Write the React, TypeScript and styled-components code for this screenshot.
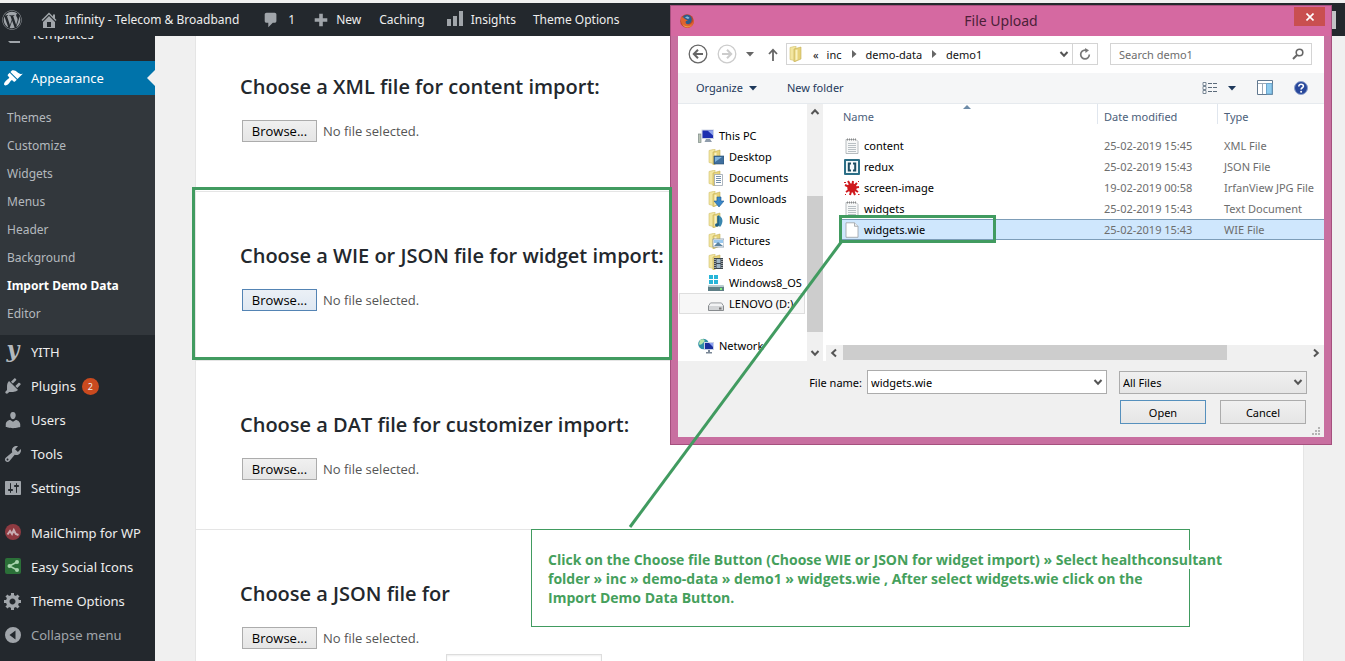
import React from "react";
import styled, { createGlobalStyle } from "styled-components";
import { FaWordpress } from "react-icons/fa";

const GREEN = "#419b60";
const UI_FONT = `"Noto Sans", "Open Sans", sans-serif`;

const GlobalStyle = createGlobalStyle`
  * { box-sizing: border-box; }
  body { margin: 0; background: #f0f0f0; font-family: ${UI_FONT}; }
  button, input, select { font: inherit; color: inherit; margin: 0; }
  ul { list-style: none; margin: 0; padding: 0; }
  a { color: inherit; text-decoration: none; }
`;

/* ---------- page ---------- */

const Page = styled.div`
  position: relative;
  display: flex;
  flex-direction: column;
  height: 100vh;
  padding-top: 3px;
  overflow: hidden;
`;

const AdminBar = styled.header`
  position: relative;
  z-index: 1;
  display: flex;
  flex: none;
  align-items: center;
  height: 33px;
  padding: 0 9px 0 2px;
  background: #23282d;
  color: #eee;
  font-size: 12px;
  white-space: nowrap;
`;

const BarLink = styled.a<{ $gap: number; $space?: number }>`
  display: flex;
  align-items: center;
  gap: ${(p) => p.$space ?? 8}px;
  margin-left: ${(p) => p.$gap}px;
  svg { color: #a0a5aa; }
`;

const Avatar = styled.span`
  width: 18px;
  height: 18px;
  margin-left: auto;
  background: #c3c4c7;
`;

const Body = styled.div`
  display: flex;
  flex: 1;
  min-height: 0;
`;

/* ---------- side menu ---------- */

const Sidebar = styled.nav`
  flex: none;
  width: 155px;
  background: #23282d;
  color: #eee;
  font-size: 13px;
`;

const Menu = styled.ul`
  margin-top: -19px;
`;

const MenuItem = styled.li<{ $after?: number }>`
  margin-bottom: ${(p) => p.$after ?? 0}px;
`;

const MenuLink = styled.a<{ $active?: boolean; $muted?: boolean }>`
  position: relative;
  display: flex;
  align-items: center;
  gap: 8px;
  height: 34px;
  padding-left: 3px;
  white-space: nowrap;
  background: ${(p) => (p.$active ? "#0073aa" : "transparent")};
  color: ${(p) => (p.$active ? "#fff" : p.$muted ? "#a0a5aa" : "#eee")};
  svg { flex: none; color: ${(p) => (p.$active ? "#fff" : "#a0a5aa")}; }
  &::after {
    content: "";
    display: ${(p) => (p.$active ? "block" : "none")};
    position: absolute;
    right: 0;
    border: 8px solid transparent;
    border-left: 0;
    border-right-color: #f0f0f0;
  }
`;

const YithMark = styled.span`
  width: 20px;
  padding-bottom: 6px;
  color: #b4b9be;
  font: italic bold 22px/18px "DejaVu Serif", serif;
  text-align: center;
`;

const Count = styled.span`
  width: 17px;
  height: 17px;
  margin-left: -2px;
  border-radius: 50%;
  background: #ca4a1f;
  font-size: 9px;
  line-height: 17px;
  text-align: center;
`;

const SubMenu = styled.ul`
  padding: 9px 0 7px;
  background: #32373c;
  color: #b4b9be;
`;

const SubLink = styled.a<{ $current?: boolean }>`
  display: block;
  padding-left: 7px;
  line-height: 28px;
  font-size: 12px;
  font-weight: ${(p) => (p.$current ? 700 : 400)};
  color: ${(p) => (p.$current ? "#fff" : "inherit")};
`;

/* ---------- import panel ---------- */

const Main = styled.main`
  flex: 1;
  min-width: 0;
  padding: 0 41px 0 40px;
  background: #f0f0f0;
`;

const Panel = styled.div`
  min-height: calc(100% + 13px);
  margin-top: -13px;
  border: 1px solid #e5e5e5;
  border-width: 0 1px;
  background: #fff;
`;

const Section = styled.section<{ $rule?: string }>`
  padding: 50px 44px 0;
  &::after {
    content: "";
    display: block;
    width: ${(p) => p.$rule ?? "100%"};
    margin: 49px -44px 0;
    border-bottom: 1px solid #e5e5e5;
  }
`;

const Heading = styled.h2`
  margin: 0 0 19px;
  color: #23282d;
  font-family: "Open Sans", "Noto Sans", sans-serif;
  font-size: 20px;
  font-weight: 600;
  line-height: 28px;
  white-space: nowrap;
`;

const FileRow = styled.div`
  display: flex;
  align-items: center;
  gap: 6px;
  padding-left: 2px;
  color: #555;
  font-family: "Open Sans", "Noto Sans", sans-serif;
  font-size: 13px;
`;

const BrowseButton = styled.button<{ $focus?: boolean }>`
  width: 75px;
  height: 22px;
  padding: 0;
  border: 1px solid ${(p) => (p.$focus ? "#5484b4" : "#acacac")};
  background: ${(p) => (p.$focus ? "linear-gradient(#ebf0f6, #dfe8f2)" : "linear-gradient(#f0f0f0, #e5e5e5)")};
  color: #000;
  line-height: 20px;
`;

const OptionsInput = styled.input`
  display: block;
  width: 156px;
  height: 28px;
  margin: 5px 0 0 206px;
  border: 1px solid #ddd;
  box-shadow: inset 0 1px 2px rgba(0, 0, 0, 0.07);
`;

/* ---------- upload window ---------- */

const Window = styled.div`
  position: absolute;
  z-index: 2;
  top: 5px;
  left: 670px;
  display: flex;
  flex-direction: column;
  width: 662px;
  height: 440px;
  padding: 0 7px 7px;
  border: 1px solid #a5507e;
  background: #c86fa0;
  color: #111;
  font-size: 11px;
`;

const TitleBar = styled.div`
  position: relative;
  display: flex;
  flex: none;
  align-items: center;
  height: 30px;
  margin: 0 -7px;
  padding: 0 9px;
  background: #d569a1;
`;

const WindowTitle = styled.h1`
  flex: 1;
  margin: 0 14px 0 0;
  color: #4b1f38;
  font-size: 14px;
  font-weight: 400;
  line-height: 30px;
  text-align: center;
`;

const CloseButton = styled.button`
  position: absolute;
  top: 1px;
  right: 6px;
  display: grid;
  place-items: center;
  width: 31px;
  height: 19px;
  padding: 0;
  border: 0;
  background: #c94f50;
  color: #fff;
`;

const Client = styled.div`
  display: flex;
  flex: 1;
  flex-direction: column;
  min-height: 0;
  background: #f0f0f0;
`;

const AddressRow = styled.div`
  display: flex;
  flex: none;
  align-items: center;
  height: 37px;
  padding: 0 12px 1px 10px;
  background: #fff;
`;

const PlainButton = styled.button<{ $gap?: number }>`
  display: inline-flex;
  align-items: center;
  gap: ${(p) => p.$gap ?? 6}px;
  padding: 0;
  border: 0;
  background: none;
`;

const NavButtons = styled.div`
  display: flex;
  align-items: center;
  gap: 9px;
  width: 98px;
  padding-right: 8px;
  > :last-child { margin-left: auto; }
`;

const PathBox = styled.div`
  display: flex;
  flex: 1;
  align-items: center;
  height: 22px;
  padding-left: 2px;
  border: 1px solid #d4d4d4;
`;

const Crumbs = styled.div`
  display: flex;
  flex: 1;
  align-items: center;
  gap: 8px;
`;

const RefreshButton = styled(PlainButton)`
  justify-content: center;
  width: 25px;
  height: 20px;
  margin-left: 3px;
  border-left: 1px solid #d4d4d4;
`;

const SearchBox = styled.label`
  display: flex;
  align-items: center;
  width: 202px;
  height: 22px;
  margin-left: 12px;
  padding: 0 7px 0 8px;
  border: 1px solid #d4d4d4;
`;

const SearchInput = styled.input`
  flex: 1;
  min-width: 0;
  padding: 0;
  border: 0;
  outline: 0;
  background: none;
  &::placeholder { color: #6d6d6d; opacity: 1; }
`;

const ToolRow = styled.div`
  display: flex;
  flex: none;
  align-items: center;
  height: 31px;
  padding: 0 16px 1px 18px;
  border-bottom: 1px solid #e6eaee;
  background: #f5f6f7;
  color: #1e395b;
`;

const ToolGroup = styled.div<{ $gap: number; $end?: boolean }>`
  display: flex;
  align-items: center;
  gap: ${(p) => p.$gap}px;
  margin-left: ${(p) => (p.$end ? "auto" : 0)};
`;

const Browser = styled.div`
  display: flex;
  flex: none;
  height: 257px;
  background: #fff;
`;

const Tree = styled.ul`
  flex: none;
  width: 129px;
  padding: 21px 2px 0 1px;
  overflow: hidden;
`;

const TreeRow = styled.li<{ $depth: number; $selected?: boolean; $after?: number }>`
  display: flex;
  align-items: center;
  gap: 5px;
  height: 21px;
  margin-bottom: ${(p) => p.$after ?? 0}px;
  padding-left: ${(p) => (p.$depth ? 28 : 18)}px;
  border: 1px solid ${(p) => (p.$selected ? "#dedede" : "transparent")};
  background: ${(p) => (p.$selected ? "#f7f7f7" : "none")};
  color: #000;
  white-space: nowrap;
  svg { flex: none; }
`;

const VScroll = styled.div`
  display: flex;
  flex: none;
  flex-direction: column;
  align-items: center;
  width: 16px;
  background: #f0f0f0;
`;

const VThumb = styled.div`
  width: 16px;
  height: 136px;
  margin: 76px 0 auto;
  background: #cdcdcd;
`;

const ArrowCell = styled.span`
  display: grid;
  flex: none;
  place-items: center;
  width: 16px;
  height: 16px;
`;

const Files = styled.div`
  display: flex;
  flex: 1;
  flex-direction: column;
  min-width: 0;
  padding-left: 3px;
`;

const SortMark = styled.i`
  position: absolute;
  top: 1px;
  left: 121px;
  line-height: 0;
`;

const FileTable = styled.table`
  position: relative;
  width: 482px;
  margin: 0 0 auto auto;
  border-collapse: collapse;
  table-layout: fixed;
  color: #6d6d6d;
  th, td { overflow: hidden; padding: 0; text-align: left; white-space: nowrap; }
  tbody td { height: 21px; padding-left: 7px; }
  tbody td:first-child { padding-left: 2px; color: #000; }
`;

const ColHead = styled.th<{ $first?: boolean }>`
  height: 31px;
  color: #4c607a;
  font-weight: 400;
  vertical-align: top;
  span {
    display: block;
    height: 20px;
    padding-left: ${(p) => (p.$first ? 1 : 6)}px;
    border-left: ${(p) => (p.$first ? "0" : "1px solid #e0e6ee")};
    line-height: 26px;
  }
`;

const FileTr = styled.tr<{ $selected?: boolean }>`
  background: ${(p) => (p.$selected ? "#cfe7fd" : "none")};
  box-shadow: ${(p) => (p.$selected ? "inset 0 1px #7d9db8, inset 0 -1px #7d9db8" : "none")};
`;

const FileName = styled.span`
  display: flex;
  align-items: center;
  gap: 4px;
`;

const HScroll = styled.div`
  display: flex;
  flex: none;
  justify-content: space-between;
  height: 16px;
  background: #f0f0f0;
`;

const HThumb = styled.div`
  width: 384px;
  height: 15px;
  margin: 0 auto 0 1px;
  background: #cdcdcd;
`;

const Footer = styled.form`
  position: relative;
  display: grid;
  grid-template-columns: 240px 188px;
  justify-content: end;
  gap: 6px 12px;
  padding: 9px 17px 13px 0;
  color: #000;
`;

const NameField = styled.div`
  position: relative;
  display: flex;
  align-items: center;
  justify-content: flex-end;
`;

const NameLabel = styled.label`
  position: absolute;
  right: 245px;
  white-space: nowrap;
`;

const NameInput = styled.input`
  width: 100%;
  height: 24px;
  padding: 0 20px 0 3px;
  border: 1px solid #acacac;
  border-radius: 0;
  background: #fff;
`;

const FieldArrow = styled.span`
  position: absolute;
  right: 4px;
  line-height: 0;
  pointer-events: none;
`;

const TypeSelect = styled.select`
  width: 100%;
  height: 23px;
  padding: 0 3px;
  border: 1px solid #acacac;
  border-radius: 0;
  background: linear-gradient(#f0f0f0, #e5e5e5);
  appearance: none;
`;

const Actions = styled.div`
  display: flex;
  grid-column: 2;
  justify-content: space-between;
  padding: 0 1px;
`;

const ActionButton = styled.button<{ $primary?: boolean }>`
  width: 86px;
  height: 24px;
  padding: 0;
  border: 1px solid ${(p) => (p.$primary ? "#5690bd" : "#acacac")};
  background: linear-gradient(#f0f0f0, #e5e5e5);
`;

const Grip = styled.span`
  position: absolute;
  right: 3px;
  bottom: 1px;
  line-height: 0;
`;

/* ---------- tutorial marks ---------- */

const Frame = styled.div<{ $x: number; $y: number; $w: number; $h: number }>`
  position: absolute;
  z-index: 3;
  top: ${(p) => p.$y}px;
  left: ${(p) => p.$x}px;
  width: ${(p) => p.$w}px;
  height: ${(p) => p.$h}px;
  border: 3px solid ${GREEN};
  pointer-events: none;
`;

const Pointer = styled.svg`
  position: absolute;
  z-index: 3;
  top: 240px;
  left: 620px;
  pointer-events: none;
`;

const Callout = styled.p`
  position: absolute;
  z-index: 3;
  top: 529px;
  left: 531px;
  width: 659px;
  height: 98px;
  margin: 0;
  padding: 20px 16px;
  border: 1px solid ${GREEN};
  background: #fff;
  color: #45a05c;
  font: 700 14px/19px "Open Sans", "Noto Sans", sans-serif;
  white-space: nowrap;
  mark { background: #fff; color: inherit; }
`;

/* ---------- icons ---------- */

const Dash = ({ d, size = 20 }: { d: string; size?: number }) => (
  <svg width={size} height={size} viewBox="0 0 20 20" fill="currentColor" fillRule="evenodd" aria-hidden>
    <path d={d} />
  </svg>
);

const paths = {
  home: "M16 8.5l1.53 1.53-1.06 1.06L10 4.6l-6.47 6.49-1.06-1.06L10 2.5l4 4v-2h2v4zm-6-2.46l6 5.99V18H4v-5.97zM12 17v-5H8v5h4z",
  comment: "M5 2h9c1.1 0 2 .9 2 2v7c0 1.1-.9 2-2 2h-2l-5 5v-5H5c-1.1 0-2-.9-2-2V4c0-1.1.9-2 2-2z",
  plus: "M8 3h4v5h5v4h-5v5H8v-5H3V8h5z",
  bars: "M2 9h4v7H2zM8 6h4v10H8zM14 1h4v15h-4z",
  templates: "M3 3h14v9H3zM5 17h12v2H7z",
  brush:
    "M14.48 11.06L7.41 3.99l1.5-1.5c.5-.56 2.3-.47 3.51.32 1.21.8 1.43 1.28 2.91 2.1 1.18.64 2.45 1.26 4.45.85zm-.71.71L6.7 4.7 4.93 6.47c-.39.39-.39 1.02 0 1.41l1.06 1.06c.39.39.39 1.03 0 1.42-.6.6-1.43 1.11-2.21 1.69-.35.26-.7.53-1.01.84C1.43 14.23.4 16.08 1.4 17.07c.99 1 2.84-.03 4.18-1.36.31-.31.58-.66.85-1.02.57-.78 1.08-1.61 1.69-2.21.39-.39 1.02-.39 1.41 0l1.06 1.06c.39.39 1.02.39 1.41 0z",
  plug:
    "M13.11 4.36L9.87 7.6 8 5.73l3.24-3.24c.35-.34 1.05-.2 1.56.32.52.51.66 1.21.31 1.55zm-8 1.77l.91-1.12 9.01 9.01-1.19.84c-.71.71-2.63 1.16-3.82 1.16H6.14L4.9 17.26c-.59.59-1.54.59-2.12 0-.59-.58-.59-1.53 0-2.12l1.24-1.24v-3.88c0-1.13.4-3.19 1.09-3.89zm7.26 3.97l3.24-3.24c.34-.35 1.04-.21 1.55.31.52.51.66 1.21.31 1.55l-3.24 3.25z",
  users:
    "M10 9.25c-2.27 0-2.73-3.44-2.73-3.44C7 4.02 7.82 2 9.97 2c2.16 0 2.98 2.02 2.71 3.81 0 0-.41 3.44-2.68 3.44zm0 2.57L12.72 10c2.39 0 4.52 2.33 4.52 4.53v2.49s-3.65 1.13-7.24 1.13c-3.65 0-7.24-1.13-7.24-1.13v-2.49c0-2.25 1.94-4.48 4.47-4.48z",
  tools:
    "M16.68 9.77c-1.34 1.34-3.3 1.67-4.95.99l-5.41 6.52c-.99.99-2.59.99-3.58 0s-.99-2.59 0-3.57l6.52-5.42c-.68-1.65-.35-3.61.99-4.95 1.28-1.28 3.12-1.62 4.72-1.06l-2.89 2.89 2.82 2.82 2.86-2.87c.53 1.58.18 3.39-1.08 4.65zM3.81 16.21c.4.39 1.04.39 1.43 0 .4-.4.4-1.04 0-1.43-.39-.4-1.03-.4-1.43 0-.39.39-.39 1.03 0 1.43z",
  settings:
    "M18 16V4c0-.55-.45-1-1-1H3c-.55 0-1 .45-1 1v12c0 .55.45 1 1 1h14c.55 0 1-.45 1-1zM8 11h1c.55 0 1 .45 1 1s-.45 1-1 1H8v1.5c0 .28-.22.5-.5.5s-.5-.22-.5-.5V13H6c-.55 0-1-.45-1-1s.45-1 1-1h1V5.5c0-.28.22-.5.5-.5s.5.22.5.5V11zm5-2h-1c-.55 0-1-.45-1-1s.45-1 1-1h1V5.5c0-.28.22-.5.5-.5s.5.22.5.5V7h1c.55 0 1 .45 1 1s-.45 1-1 1h-1v5.5c0 .28-.22.5-.5.5s-.5-.22-.5-.5V9z",
  gear:
    "M18 12h-2.18c-.17.7-.44 1.35-.81 1.93l1.54 1.54-2.1 2.1-1.54-1.54c-.58.36-1.23.63-1.91.79V19H8v-2.18c-.68-.16-1.33-.43-1.91-.79l-1.54 1.54-2.12-2.12 1.54-1.54c-.36-.58-.63-1.23-.79-1.91H1V9.03h2.17c.16-.7.44-1.35.8-1.94L2.43 5.55l2.1-2.1 1.54 1.54c.58-.37 1.24-.64 1.93-.81V2h3v2.18c.68.16 1.33.43 1.91.79l1.54-1.54 2.12 2.12-1.54 1.54c.36.59.64 1.24.8 1.94H18V12zm-8.5 1.5c1.66 0 3-1.34 3-3s-1.34-3-3-3-3 1.34-3 3 1.34 3 3 3z",
  collapse: "M10 2a8 8 0 1 0 0 16 8 8 0 0 0 0-16zM12.5 5.5v9L6.5 10z",
};

const MailChimpIcon = () => (
  <svg width="20" height="20" viewBox="0 0 20 20" aria-hidden>
    <circle cx="10" cy="9" r="8" fill="#8f3a41" />
    <path d="M4.500 11.500l2.500-3.500 2 3 1.800-4 2 4 2.700 1" fill="none" stroke="#c9adb2" strokeWidth="2" />
  </svg>
);

const ShareIcon = () => (
  <svg width="20" height="20" viewBox="0 0 20 20" aria-hidden>
    <rect x="2" y="1" width="16" height="16" rx="2" fill="#2b7038" />
    <path d="M14 5L6.500 9l7.500 4" fill="none" stroke="#a9d5ae" strokeWidth="1.500" />
    <circle cx="14" cy="5" r="2" fill="#a9d5ae" />
    <circle cx="6.500" cy="9" r="2" fill="#a9d5ae" />
    <circle cx="14" cy="13" r="2" fill="#a9d5ae" />
  </svg>
);

const Chevron = ({ turn = 0 }: { turn?: number }) => (
  <svg width="10" height="10" viewBox="0 0 10 10" aria-hidden>
    <path d="M1.500 3L5 6.800 8.500 3" transform={`rotate(${turn} 5 5)`} fill="none" stroke="#555" strokeWidth="2" />
  </svg>
);

const Triangle = ({ color, turn = 0 }: { color: string; turn?: number }) => (
  <svg width="8" height="8" viewBox="0 0 8 8" aria-hidden>
    <path d="M0 2h8L4 6.500z" transform={`rotate(${turn} 4 4)`} fill={color} />
  </svg>
);

const FirefoxIcon = () => (
  <svg width="14" height="14" viewBox="0 0 14 14" aria-hidden>
    <circle cx="7" cy="7" r="6.800" fill="#b8472a" />
    <circle cx="7" cy="5.500" r="4.800" fill="#2c5c8c" />
    <path d="M.8 3C0 10 4 13.800 8 13.800c4 0 6.500-4 5.700-8.800-.7 4-3 5.500-5.200 5.500-2.500 0-3.500-2-2.500-3.500L8 6.500 5 5 3.500 3.500z" fill="#dd6430" />
    <path d="M2.500 10c2 3 7 3.500 9.500.5-2 3.500-7.500 3.800-9.500-.5z" fill="#f4b04a" />
    <path d="M5 3.500c1.500-1.500 3.500-1 4.500.5L8 5z" fill="#86b8d8" />
  </svg>
);

const CircleArrow = ({ color, flip }: { color: string; flip?: boolean }) => (
  <svg width="20" height="20" viewBox="0 0 20 20" fill="none" stroke={color} aria-hidden>
    <circle cx="10" cy="10" r="8.800" strokeWidth="1.300" />
    <path d="M15 10H6M10 5.800L5.800 10l4.200 4.200" transform={flip ? "rotate(180 10 10)" : undefined} strokeWidth="2" />
  </svg>
);

const UpArrow = () => (
  <svg width="10" height="13" viewBox="0 0 10 13" fill="none" stroke="#666" strokeWidth="1.800" aria-hidden>
    <path d="M5 13V2M1 6l4-4.300L9 6" />
  </svg>
);

const RefreshIcon = () => (
  <svg width="12" height="12" viewBox="0 0 12 12" aria-hidden>
    <path d="M10.300 6.500A4.300 4.300 0 1 1 6 2.200h1" fill="none" stroke="#777" strokeWidth="1.700" />
    <path d="M6 0l4 2.300L6.500 5z" fill="#777" />
  </svg>
);

const SearchIcon = () => (
  <svg width="12" height="12" viewBox="0 0 12 12" fill="none" stroke="#666" aria-hidden>
    <circle cx="7.500" cy="4.500" r="3.300" strokeWidth="1.600" />
    <path d="M5 7L1 11" strokeWidth="2" />
  </svg>
);

const Folder = ({ children }: { children?: React.ReactNode }) => (
  <svg width="16" height="16" viewBox="0 0 16 16" aria-hidden>
    <path d="M1 1.500L7 0v15l-6-1.500z" fill="#f3e6a0" stroke="#d0bf6c" strokeWidth=".6" />
    <path d="M5 3l7-2v12l-7 3z" fill="#e6d27a" stroke="#c4b058" strokeWidth=".6" />
    <path d="M6.500 4l2-.6v10l-2 .8z" fill="#f9f2c2" />
    {children}
  </svg>
);

const treeIcons = {
  pc: (
    <svg width="16" height="16" viewBox="0 0 16 16" aria-hidden>
      <rect x=".5" y="6" width="2.500" height="8.500" fill="#b9c4b6" stroke="#7d8a86" strokeWidth=".7" />
      <path d="M3.500 1.500H16V11H3.500z" fill="#cfd4e4" />
      <path d="M4.500 2.500H15V10H4.500z" fill="#1d2fb0" />
      <path d="M9.500 2.500H15v5z" fill="#8fa4ee" />
      <path d="M8 11h4l2 3H6.500z" fill="#8f9cac" />
    </svg>
  ),
  desktop: (
    <Folder>
      <path d="M6 7h10v8H6z" fill="#3f6f9e" stroke="#27496c" strokeWidth=".6" />
      <path d="M7 8h7l-7 5z" fill="#7fb2dd" />
    </Folder>
  ),
  documents: (
    <Folder>
      <path d="M6.500 4.500h8v11h-8z" fill="#fff" stroke="#8b97a3" strokeWidth=".7" />
      <path d="M8 6.500h5M8 8.500h5M8 10.500h5M8 12.500h5" stroke="#7792ad" />
    </Folder>
  ),
  downloads: (
    <Folder>
      <path d="M9 6h4v4h3l-5 6-5-6h3z" fill="#3a87c8" stroke="#1f5c93" strokeWidth=".6" />
    </Folder>
  ),
  music: (
    <Folder>
      <path d="M10 3c5 2 6 7 2 12-2-2-3-5-2-12z" fill="#3a86ad" />
      <path d="M10 4v9" stroke="#1f5f86" strokeWidth="1.500" />
      <ellipse cx="9" cy="13" rx="2" ry="1.800" fill="#1f5f86" />
    </Folder>
  ),
  pictures: (
    <Folder>
      <path d="M5 6h11v8H5z" fill="#fff" stroke="#7f93a5" strokeWidth=".8" />
      <path d="M6 7h9v3H6z" fill="#9ac8ee" />
      <path d="M6 13l4-4 5 4z" fill="#5b83a0" />
    </Folder>
  ),
  videos: (
    <Folder>
      <path d="M6 4h9v11H6z" fill="#3b454d" />
      <path d="M8.500 5h4v4h-4zM8.500 10h4v4h-4z" fill="#9fb6c6" />
      <path d="M7 5v10M14 5v10" stroke="#fff" strokeDasharray="1 1" />
    </Folder>
  ),
  windows: (
    <svg width="16" height="16" viewBox="0 0 16 16" aria-hidden>
      <path d="M1 0h4v4H1zM6 0h4v4H6zM1 5h4v4H1zM6 5h4v4H6z" fill="#27b5d8" />
      <path d="M1 10h14l1 2v4H0v-4z" fill="#5f7f86" />
      <path d="M1 10h14l1 2H0z" fill="#b9cdd0" />
      <path d="M12 13h2v2h-2z" fill="#7cf07c" />
    </svg>
  ),
  drive: (
    <svg width="16" height="16" viewBox="0 0 16 16" aria-hidden>
      <path d="M2.500 7h11L15.500 10v4.500H.5V10z" fill="#d2d4d6" stroke="#7c8083" strokeWidth=".9" />
      <path d="M2.500 7.500h11l1.500 2.500H1z" fill="#f2f3f4" />
      <path d="M11 11.500h2.500v2H11z" fill="#777" />
    </svg>
  ),
  network: (
    <svg width="16" height="16" viewBox="0 0 16 16" aria-hidden>
      <circle cx="5.500" cy="6" r="5.300" fill="#2f8fa8" />
      <path d="M2 2c3-2 6 0 4 2S2 8 1 6z" fill="#b4e5a8" />
      <path d="M6 4h10v8H6z" fill="#c9d2e6" />
      <path d="M7 5h8v6H7z" fill="#1a2f9c" />
      <path d="M11 5h4v4z" fill="#8b9ff0" />
      <path d="M10 12h2v2h2v1.500H8V14h2z" fill="#7a8796" />
    </svg>
  ),
};

const fileIcons = {
  note: (
    <svg width="16" height="16" viewBox="0 0 16 16" aria-hidden>
      <path d="M2 1.500h10l2 2v12H2z" fill="#f7f8f8" stroke="#a6acb0" strokeWidth=".8" />
      <path d="M4 5.500h8M4 7.500h8M4 9.500h8M4 11.500h8M4 13.500h8" stroke="#b9c0c4" />
      <path d="M3 1.500h9" stroke="#888" strokeDasharray="1 1" strokeWidth="2" />
    </svg>
  ),
  brackets: (
    <svg width="16" height="16" viewBox="0 0 16 16" aria-hidden>
      <rect width="16" height="16" rx="1" fill="#2c6f87" />
      <path d="M2 2h12v12H2z" fill="#f4fafb" />
      <path d="M7 4.500H4.800v7H7M9 4.500h2.200v7H9" fill="none" stroke="#1d4d63" strokeWidth="2" />
    </svg>
  ),
  splat: (
    <svg width="16" height="16" viewBox="0 0 16 16" aria-hidden>
      <path d="M4 5c2-2 6-2 8 0 1 2 1 5-1 6.500-2 1.500-5 1-6.500-.5S3 7 4 5z" fill="#cf1a1e" />
      <path
        d="M8 8L4 1M8 8l1-7M8 8l5-5M8 8l7-1M8 8l6 4M8 8l3 7M8 8l-2 7M8 8l-6 4M8 8L1 5"
        stroke="#cf1a1e"
        strokeWidth="2"
      />
      <path d="M14 14h1.500v1H14zM0 2h2v1H0zM14 1h1v1h-1zM1 14h1v1H1z" fill="#cf1a1e" />
    </svg>
  ),
  blank: (
    <svg width="16" height="16" viewBox="0 0 16 16" aria-hidden>
      <path d="M2 .8h8.500l3.500 3.500v11H2z" fill="#fff" stroke="#9b9fa3" strokeWidth=".8" />
      <path d="M10.500.8v3.500H14" fill="#eee" stroke="#9b9fa3" strokeWidth=".8" />
    </svg>
  ),
};

const ViewIcon = () => (
  <svg width="16" height="12" viewBox="0 0 16 12" aria-hidden>
    <path d="M1 .5h3v3H1zM1 4.500h3v3H1zM1 8.500h3v3H1z" fill="#fff" stroke="#7a8896" />
    <path d="M6 1.500h4M11 1.500h4M6 5.500h4M11 5.500h4M6 9.500h4M11 9.500h4" stroke="#5c6b7b" />
  </svg>
);

const PaneIcon = () => (
  <svg width="16" height="15" viewBox="0 0 16 15" aria-hidden>
    <path d="M.5.500h15v14H.5z" fill="#fff" stroke="#61788f" />
    <path d="M1 3.500h14M5.500 3v11" stroke="#9aa9b8" />
    <path d="M9.500 3.500H15V14H9.500z" fill="#8ecbee" stroke="#6da5cc" />
  </svg>
);

const HelpIcon = () => (
  <svg width="14" height="14" viewBox="0 0 14 14" aria-hidden>
    <circle cx="7" cy="7" r="6.500" fill="#27479b" stroke="#8da0cc" />
    <path d="M4.800 5.500c0-3.200 4.600-2.800 4.600-.3 0 1.500-2.300 1.600-2.300 3.300" fill="none" stroke="#fff" strokeWidth="1.600" />
    <circle cx="7.100" cy="10.800" r="1" fill="#fff" />
  </svg>
);

/* ---------- data ---------- */

const submenu = ["Themes", "Customize", "Widgets", "Menus", "Header", "Background", "Import Demo Data", "Editor"];

const lowerMenu: { label: string; icon: React.ReactNode; count?: number; after?: number; muted?: boolean }[] = [
  { label: "YITH", icon: <YithMark aria-hidden>y</YithMark> },
  { label: "Plugins", icon: <Dash d={paths.plug} />, count: 2 },
  { label: "Users", icon: <Dash d={paths.users} /> },
  { label: "Tools", icon: <Dash d={paths.tools} /> },
  { label: "Settings", icon: <Dash d={paths.settings} />, after: 11 },
  { label: "MailChimp for WP", icon: <MailChimpIcon /> },
  { label: "Easy Social Icons", icon: <ShareIcon /> },
  { label: "Theme Options", icon: <Dash d={paths.gear} /> },
  { label: "Collapse menu", icon: <Dash d={paths.collapse} />, muted: true },
];

const sections = [
  { title: "Choose a XML file for content import:" },
  { title: "Choose a WIE or JSON file for widget import:", focus: true },
  { title: "Choose a DAT file for customizer import:", rule: "336px" },
];

const tree: { label: string; icon: keyof typeof treeIcons; depth: number; selected?: boolean; after?: number }[] = [
  { label: "This PC", icon: "pc", depth: 0 },
  { label: "Desktop", icon: "desktop", depth: 1 },
  { label: "Documents", icon: "documents", depth: 1 },
  { label: "Downloads", icon: "downloads", depth: 1 },
  { label: "Music", icon: "music", depth: 1 },
  { label: "Pictures", icon: "pictures", depth: 1 },
  { label: "Videos", icon: "videos", depth: 1 },
  { label: "Windows8_OS", icon: "windows", depth: 1 },
  { label: "LENOVO (D:)", icon: "drive", depth: 1, selected: true, after: 21 },
  { label: "Network", icon: "network", depth: 0 },
];

const files: { name: string; icon: keyof typeof fileIcons; date: string; type: string; selected?: boolean }[] = [
  { name: "content", icon: "note", date: "25-02-2019 15:45", type: "XML File" },
  { name: "redux", icon: "brackets", date: "25-02-2019 15:43", type: "JSON File" },
  { name: "screen-image", icon: "splat", date: "19-02-2019 00:58", type: "IrfanView JPG File" },
  { name: "widgets", icon: "note", date: "25-02-2019 15:43", type: "Text Document" },
  { name: "widgets.wie", icon: "blank", date: "25-02-2019 15:43", type: "WIE File", selected: true },
];

/* ---------- parts ---------- */

const FilePicker = ({ focus }: { focus?: boolean }) => (
  <FileRow>
    <BrowseButton type="button" $focus={focus}>
      Browse...
    </BrowseButton>
    <span>No file selected.</span>
  </FileRow>
);

const UploadWindow = () => (
  <Window role="dialog" aria-labelledby="upload-title">
    <TitleBar>
      <FirefoxIcon />
      <WindowTitle id="upload-title">File Upload</WindowTitle>
      <CloseButton type="button" aria-label="Close">
        <svg width="8" height="8" viewBox="0 0 8 8" stroke="#fff" strokeWidth="1.600" aria-hidden>
          <path d="M.5.500l7 7M7.500.500l-7 7" />
        </svg>
      </CloseButton>
    </TitleBar>
    <Client>
      <AddressRow>
        <NavButtons>
          <PlainButton type="button" aria-label="Back"><CircleArrow color="#666" /></PlainButton>
          <PlainButton type="button" aria-label="Forward"><CircleArrow color="#ccc" flip /></PlainButton>
          <PlainButton type="button" aria-label="Recent"><Triangle color="#666" /></PlainButton>
          <PlainButton type="button" aria-label="Up"><UpArrow /></PlainButton>
        </NavButtons>
        <PathBox>
          <Crumbs>
            <Folder />
            <span>«</span>
            <PlainButton type="button">inc</PlainButton>
            <Triangle color="#666" turn={-90} />
            <PlainButton type="button">demo-data</PlainButton>
            <Triangle color="#666" turn={-90} />
            <PlainButton type="button">demo1</PlainButton>
          </Crumbs>
          <Chevron />
          <RefreshButton type="button" aria-label="Refresh"><RefreshIcon /></RefreshButton>
        </PathBox>
        <SearchBox>
          <SearchInput placeholder="Search demo1" aria-label="Search demo1" />
          <SearchIcon />
        </SearchBox>
      </AddressRow>
      <ToolRow>
        <ToolGroup $gap={30}>
          <PlainButton type="button">
            Organize <Triangle color="#1e395b" />
          </PlainButton>
          <PlainButton type="button">New folder</PlainButton>
        </ToolGroup>
        <ToolGroup $gap={21} $end>
          <PlainButton type="button" aria-label="Change view" $gap={10}>
            <ViewIcon />
            <Triangle color="#1e395b" />
          </PlainButton>
          <PlainButton type="button" aria-label="Preview pane"><PaneIcon /></PlainButton>
          <PlainButton type="button" aria-label="Help"><HelpIcon /></PlainButton>
        </ToolGroup>
      </ToolRow>
      <Browser>
        <Tree>
          {tree.map((t) => (
            <TreeRow key={t.label} $depth={t.depth} $selected={t.selected} $after={t.after}>
              {treeIcons[t.icon]}
              {t.label}
            </TreeRow>
          ))}
        </Tree>
        <VScroll>
          <ArrowCell><Chevron turn={180} /></ArrowCell>
          <VThumb />
          <ArrowCell><Chevron /></ArrowCell>
        </VScroll>
        <Files>
          <FileTable>
            <colgroup>
              <col />
              <col width="120" />
              <col width="107" />
            </colgroup>
            <thead>
              <tr>
                <ColHead $first>
                  <span>Name</span>
                  <SortMark>
                    <svg width="8" height="4" viewBox="0 0 8 4" aria-hidden>
                      <path d="M0 4l4-4 4 4z" fill="#6d8ba8" />
                    </svg>
                  </SortMark>
                </ColHead>
                <ColHead><span>Date modified</span></ColHead>
                <ColHead><span>Type</span></ColHead>
              </tr>
            </thead>
            <tbody>
              {files.map((f) => (
                <FileTr key={f.name} $selected={f.selected}>
                  <td>
                    <FileName>
                      {fileIcons[f.icon]}
                      {f.name}
                    </FileName>
                  </td>
                  <td>{f.date}</td>
                  <td>{f.type}</td>
                </FileTr>
              ))}
            </tbody>
          </FileTable>
          <HScroll>
            <ArrowCell><Chevron turn={90} /></ArrowCell>
            <HThumb />
            <ArrowCell><Chevron turn={-90} /></ArrowCell>
          </HScroll>
        </Files>
      </Browser>
      <Footer onSubmit={(e) => e.preventDefault()}>
        <NameField>
          <NameLabel htmlFor="file-name">File name:</NameLabel>
          <NameInput id="file-name" defaultValue="widgets.wie" />
          <FieldArrow><Chevron /></FieldArrow>
        </NameField>
        <NameField>
          <TypeSelect aria-label="File type">
            <option>All Files</option>
          </TypeSelect>
          <FieldArrow><Chevron /></FieldArrow>
        </NameField>
        <Actions>
          <ActionButton type="submit" $primary>Open</ActionButton>
          <ActionButton type="button">Cancel</ActionButton>
        </Actions>
        <Grip>
          <svg width="9" height="9" viewBox="0 0 9 9" fill="#b4b4b4" aria-hidden>
            <path d="M6 0h2v2H6zM3 3h2v2H3zM6 3h2v2H6zM0 6h2v2H0zM3 6h2v2H3zM6 6h2v2H6z" />
          </svg>
        </Grip>
      </Footer>
    </Client>
  </Window>
);

export default function App() {
  return (
    <>
      <GlobalStyle />
      <Page>
        <AdminBar>
          <BarLink href="#" $gap={0} aria-label="About WordPress"><FaWordpress size={20} /></BarLink>
          <BarLink href="#" $gap={17} $space={6}><Dash d={paths.home} />Infinity - Telecom &amp; Broadband</BarLink>
          <BarLink href="#" $gap={23}><Dash d={paths.comment} size={18} />1</BarLink>
          <BarLink href="#" $gap={17} $space={6}><Dash d={paths.plus} size={18} />New</BarLink>
          <BarLink href="#" $gap={18}>Caching</BarLink>
          <BarLink href="#" $gap={20} $space={6}><Dash d={paths.bars} />Insights</BarLink>
          <BarLink href="#" $gap={17}>Theme Options</BarLink>
          <Avatar />
        </AdminBar>
        <Body>
          <Sidebar>
            <Menu>
              <MenuItem $after={10}>
                <MenuLink href="#"><Dash d={paths.templates} />Templates</MenuLink>
              </MenuItem>
              <MenuItem>
                <MenuLink href="#" $active><Dash d={paths.brush} />Appearance</MenuLink>
                <SubMenu>
                  {submenu.map((s) => (
                    <li key={s}>
                      <SubLink href="#" $current={s === "Import Demo Data"}>{s}</SubLink>
                    </li>
                  ))}
                </SubMenu>
              </MenuItem>
              {lowerMenu.map((m) => (
                <MenuItem key={m.label} $after={m.after}>
                  <MenuLink href="#" $muted={m.muted}>
                    {m.icon}
                    {m.label}
                    {m.count && <Count>{m.count}</Count>}
                  </MenuLink>
                </MenuItem>
              ))}
            </Menu>
          </Sidebar>
          <Main>
            <Panel>
              {sections.map((s) => (
                <Section key={s.title} $rule={s.rule}>
                  <Heading>{s.title}</Heading>
                  <FilePicker focus={s.focus} />
                </Section>
              ))}
              <Section>
                <Heading>Choose a JSON file for</Heading>
                <FilePicker />
                <OptionsInput aria-label="Option name" />
              </Section>
            </Panel>
          </Main>
        </Body>
        <Frame $x={192} $y={187} $w={480} $h={173} />
        <UploadWindow />
        <Frame $x={839} $y={215} $w={157} $h={28} />
        <Pointer width="230" height="290" viewBox="0 0 230 290" aria-hidden>
          <path d="M222 1L10 287" stroke={GREEN} strokeWidth="3" />
        </Pointer>
        <Callout>
          Click on the Choose file Button (Choose WIE or JSON for widget import) » Select <mark>healthconsultant</mark>
          <br />
          folder » inc » demo-data » demo1 » widgets.wie , After select widgets.wie click on the
          <br />
          Import Demo Data Button.
        </Callout>
      </Page>
    </>
  );
}
